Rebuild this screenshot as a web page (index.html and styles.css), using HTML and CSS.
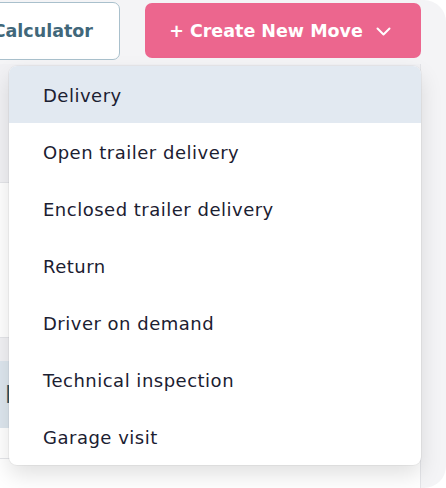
FILE: index.html
```html
<!DOCTYPE html>
<html>
<head>
<meta charset="utf-8">
<link rel="stylesheet" href="styles.css">
</head>
<body>
<div class="frame">
  <div class="toolbar">
    <button class="btn btn-outline">Price Calculator</button>
    <button class="btn btn-primary">+ Create New Move
      <svg class="chev" width="15" height="9" viewBox="0 0 15 9"><path d="M1.5 1.5 L7.5 7.5 L13.5 1.5" fill="none" stroke="#fff" stroke-width="2" stroke-linecap="round" stroke-linejoin="round"/></svg>
    </button>
  </div>
  <div class="card">
    <div class="row row-head"></div>
    <div class="row row-white tall"></div>
    <div class="row row-gray short"></div>
    <div class="row row-blue"><span class="cell">N</span></div>
    <div class="row row-white mid"></div>
    <div class="row row-last"></div>
  </div>
  <ul class="menu">
    <li class="item active">Delivery</li>
    <li class="item">Open trailer delivery</li>
    <li class="item">Enclosed trailer delivery</li>
    <li class="item">Return</li>
    <li class="item">Driver on demand</li>
    <li class="item">Technical inspection</li>
    <li class="item">Garage visit</li>
  </ul>
</div>
</body>
</html>
```
FILE: styles.css
```css
* { box-sizing: border-box; }
html, body { margin: 0; padding: 0; background: #ffffff; }
body { font-family: "DejaVu Sans", "Noto Sans", sans-serif; }

.frame {
  position: relative;
  width: 446px;
  height: 488px;
  background: #f4f4f6;
  border-radius: 0 22px 22px 0;
  overflow: hidden;
  display: flex;
  flex-direction: column;
}

.toolbar {
  display: flex;
  justify-content: flex-end;
  align-items: flex-start;
  gap: 25px;
  padding: 3px 25px 0 0;
  height: 64px;
}

.btn {
  font-family: inherit;
  font-weight: 700;
  font-size: 17.5px;
  border-radius: 7px;
  cursor: pointer;
  white-space: nowrap;
  flex-shrink: 0;
}

.btn-outline {
  height: 58px;
  margin-top: -1px;
  background: #ffffff;
  border: 1.5px solid #a9c0cc;
  color: #41677a;
  padding: 0 26px 0 24px;
}

.btn-primary {
  width: 276px;
  height: 55px;
  background: #ec668e;
  border: none;
  color: #ffffff;
  display: flex;
  align-items: center;
  justify-content: center;
  gap: 13px;
  padding: 0 6px 0 0;
}

.chev { display: block; margin-top: 1px; }

.card {
  flex: 1;
  margin: 0 25px 0 -20px;
  background: #ffffff;
  border-right: 1px solid #e3e4e8;
  display: flex;
  flex-direction: column;
}

.row { border-bottom: 1px solid #e4e5e9; }
.row-head { height: 119px; background: #f1f1f4; }
.row-white { background: #ffffff; }
.tall { height: 155px; }
.row-gray { background: #f1f1f4; border-bottom: none; }
.short { height: 23px; }
.row-blue {
  height: 67px;
  background: #dde6ee;
  border-bottom: none;
  display: flex;
  align-items: center;
  padding-left: 25px;
}
.cell { color: #2d5566; font-weight: 700; font-size: 24px; }
.mid { height: 31px; }
.row-last { flex: 1; border-bottom: none; }

.menu {
  position: absolute;
  left: 9px;
  top: 66px;
  width: 412px;
  margin: 0;
  padding: 0;
  list-style: none;
  background: #ffffff;
  border-radius: 8px;
  box-shadow: 0 0 0 1px rgba(0, 0, 0, 0.04), 0 10px 22px rgba(0, 0, 0, 0.12);
}

.item {
  height: 57px;
  display: flex;
  align-items: center;
  padding: 2px 0 0 34px;
  font-size: 18px;
  letter-spacing: 0.5px;
  color: #1b2031;
}

.item.active {
  background: #e2e9f1;
  border-radius: 8px 8px 0 0;
}
```
